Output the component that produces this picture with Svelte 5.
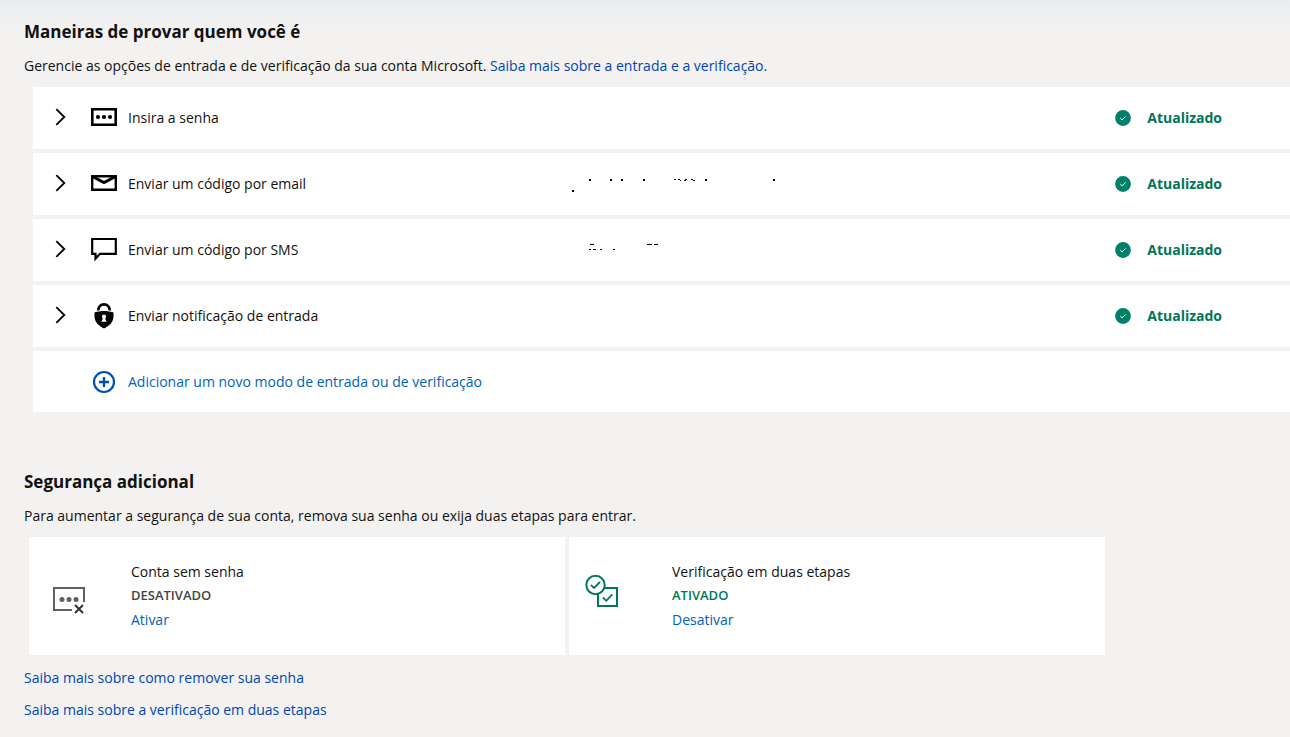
<script>
	const methods = [
		{ icon: 'password', label: 'Insira a senha' },
		{ icon: 'email', label: 'Enviar um código por email' },
		{ icon: 'sms', label: 'Enviar um código por SMS' },
		{ icon: 'lock', label: 'Enviar notificação de entrada' }
	];
</script>

<main>
	<section>
		<h2>Maneiras de provar quem você é</h2>
		<p>
			Gerencie as opções de entrada e de verificação da sua conta Microsoft.
			<a href="#saiba-mais">Saiba mais sobre a entrada e a verificação.</a>
		</p>

		<ul class="methods">
			{#each methods as { icon, label }}
				<li>
					<button class="expand" aria-label={label}>
						<svg width="12" height="18" viewBox="0 0 12 18" fill="none" stroke="#000" stroke-width="1.8">
							<path d="M1.3 1.2 9.3 9l-8 7.8" />
						</svg>
					</button>
					<svg class="icon" width="26" height="26" viewBox="0 0 26 26">
						{#if icon === 'password'}
							<path d="M1.300 4.300h23.400v15.400H1.300z" fill="none" stroke="#000" stroke-width="2.6" />
							<circle cx="7" cy="12" r="2.100" />
							<circle cx="13" cy="12" r="2.100" />
							<circle cx="19" cy="12" r="2.100" />
						{:else if icon === 'email'}
							<path d="M1.200 5.200h23.600v13.600H1.200z" fill="none" stroke="#000" stroke-width="2.400" />
							<path d="M1.500 5.400 13 11.600l11.500-6.200" fill="none" stroke="#000" stroke-width="2.800" />
						{:else if icon === 'sms'}
							<path d="M1.200 2h23.600v14.800H9l-4.500 4.800v-4.800H1.200z" fill="none" stroke="#000" stroke-width="2.200" />
						{:else}
							<path d="M7.300 7.500V6.600a5.700 5.200 0 0 1 11.400 0v.9" fill="none" stroke="#000" stroke-width="2.600" />
							<path d="M13 8c3.200 0 6.500.500 9.500 1.500v4c0 5.500-4.300 9.500-9.500 12-5.200-2.500-9.500-6.500-9.500-12v-4c3-1 6.300-1.500 9.500-1.500z" />
							<path d="M13 11.500a2.200 2.200 0 0 1 1.200 4l1.400 3.300h-5.200l1.400-3.300a2.200 2.200 0 0 1 1.200-4z" fill="#fff" />
						{/if}
					</svg>
					<span class="label">{label}</span>
					<span class="detail">
						{#if icon === 'email'}
							<svg width="210" height="24" viewBox="0 0 210 24">
								<path d="M4 18h2v2H4zM21 7h2v2h-2zM42 7h2v2h-2zM53 7h2v2h-2zM75 7h2v2h-2zM106 7h2v1h-2zM110 7h2v1h-2zM112 8h1v1h-1zM116 8h2v1h-2zM117 7h2v1h-2zM123 7h2v1h-2zM125 8h2v1h-2zM137 7h2v2h-2zM205 7h2v2h-2z" />
							</svg>
						{:else if icon === 'sms'}
							<svg width="210" height="24" viewBox="0 0 210 24">
								<path d="M22 6h4v1h-4zM21 11h2v1h-2zM25 11h3v1h-3zM32 11h2v1h-2zM45 11h2v1h-2zM79 6h5v1h-5zM86 6h4v1h-4z" />
							</svg>
						{/if}
					</span>
					<span class="status">
						<svg width="16" height="16" viewBox="0 0 16 16">
							<circle cx="8" cy="8" r="7.900" fill="#008068" />
							<path d="m5.300 8.200 1.800 1.600 3.500-3.300" fill="none" stroke="#fff" />
						</svg>
						Atualizado
					</span>
				</li>
			{/each}
			<li class="add">
				<a href="#adicionar">
					<svg width="24" height="24" viewBox="0 0 24 24" fill="none" stroke="#0050b3">
						<circle cx="12" cy="12" r="10" stroke-width="2.200" />
						<path d="M12 7v10M7 12h10" stroke-width="2.400" />
					</svg>
					Adicionar um novo modo de entrada ou de verificação
				</a>
			</li>
		</ul>
	</section>

	<section class="extra">
		<h2>Segurança adicional</h2>
		<p>Para aumentar a segurança de sua conta, remova sua senha ou exija duas etapas para entrar.</p>

		<div class="cards">
			<article>
				<div class="figure">
					<svg width="34" height="30" viewBox="0 0 34 30" fill="none" stroke="#5f5f5f" stroke-width="2">
						<path d="M31 17V3H1v22h18" />
						<g fill="#5f5f5f" stroke="none">
							<circle cx="9" cy="14.500" r="2.500" />
							<circle cx="16" cy="14.500" r="2.500" />
							<circle cx="23" cy="14.500" r="2.500" />
						</g>
						<path d="m22 20 8 8m0-8-8 8" stroke="#333" />
					</svg>
				</div>
				<div>
					<h3>Conta sem senha</h3>
					<strong>DESATIVADO</strong>
					<a href="#ativar">Ativar</a>
				</div>
			</article>
			<article class="on">
				<div class="figure">
					<svg width="34" height="34" viewBox="0 0 34 34" fill="none" stroke="#00785c" stroke-width="2">
						<path d="M13 20v12h19V14H19.500" />
						<circle cx="10.500" cy="11" r="9.200" />
						<path d="m6 11 3 3 6-6M18 23.500l3.300 3.300 6-6.500" stroke-width="1.800" />
					</svg>
				</div>
				<div>
					<h3>Verificação em duas etapas</h3>
					<strong>ATIVADO</strong>
					<a href="#desativar">Desativar</a>
				</div>
			</article>
		</div>

		<div class="links">
			<a href="#remover-senha">Saiba mais sobre como remover sua senha</a>
			<a href="#duas-etapas">Saiba mais sobre a verificação em duas etapas</a>
		</div>
	</section>
</main>

<style>
	:global(body) {
		margin: 0;
		background: #f3f2f1;
	}

	main {
		padding: 20px 0 16px;
		background: linear-gradient(#e9ecef, #f3f2f1 32px);
		color: #111;
		font: 14px/24px 'Segoe UI', 'Open Sans', 'Noto Sans', sans-serif;
	}

	h2 {
		margin: 0 24px 10px;
		font-size: 17px;
		font-weight: 700;
		line-height: 24px;
	}

	p {
		margin: 0 24px;
	}

	a {
		color: #0046b0;
		text-decoration: none;
	}

	.methods {
		display: grid;
		gap: 4px;
		margin: 9px 0 0 33px;
		padding: 0;
		list-style: none;
	}

	li {
		display: flex;
		align-items: center;
		height: 62px;
		background: #fff;
	}

	.expand {
		display: flex;
		margin: 0 23px 0 16px;
		padding: 6px 0 8px 6px;
		border: 0;
		background: none;
	}

	.expand svg {
		padding-right: 1px;
	}

	.label {
		flex: 0 0 440px;
		margin-left: 11px;
	}

	.detail {
		flex: 1;
		display: flex;
	}

	.status {
		display: flex;
		align-items: center;
		gap: 16px;
		margin-right: 68px;
		color: #007658;
		font-weight: 700;
	}

	.add {
		height: 61px;
	}

	.add a {
		display: flex;
		align-items: center;
		gap: 12px;
		margin-left: 59px;
		color: #0062b8;
	}

	.extra {
		margin-top: 58px;
	}

	.cards {
		display: grid;
		grid-template-columns: 1fr 1fr;
		gap: 4px;
		max-width: 1076px;
		margin: 9px 24px 0 29px;
	}

	article {
		display: flex;
		padding: 23px 24px;
		background: #fff;
	}

	.figure {
		display: flex;
		align-items: center;
		width: 78px;
		padding-top: 8px;
	}

	.on .figure {
		align-items: flex-start;
		width: 87px;
		padding-top: 14px;
	}

	.on {
		padding-left: 16px;
	}

	h3 {
		margin: 0;
		font-size: 14px;
		font-weight: 500;
		line-height: 24px;
	}

	strong {
		display: block;
		margin-bottom: 2px;
		color: #444;
		font-size: 13px;
		font-weight: 600;
		line-height: 22px;
	}

	.on strong {
		color: #007658;
	}

	article a {
		color: #0062b8;
	}

	.links {
		display: grid;
		gap: 8px;
		justify-items: start;
		margin: 11px 24px 0;
	}
</style>
